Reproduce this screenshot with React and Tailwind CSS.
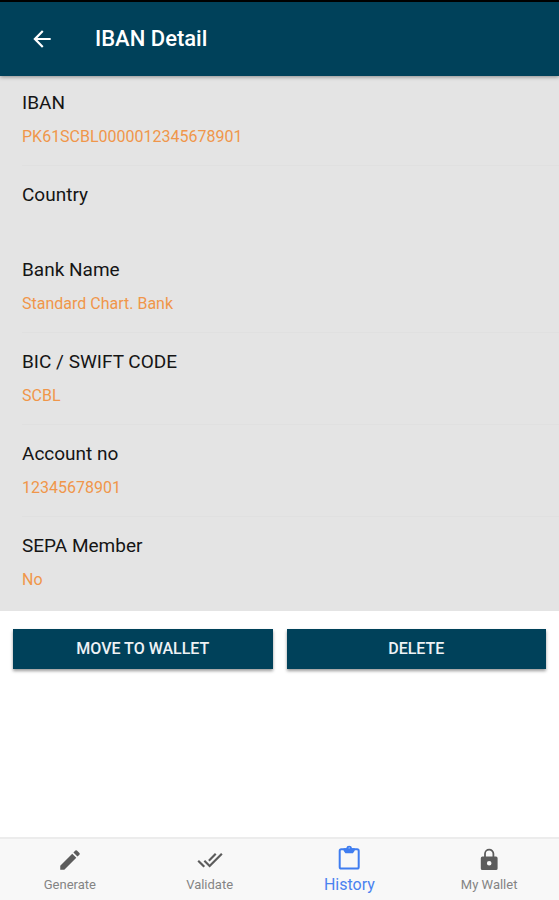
import React, { useState } from "react";
import { MdArrowBack, MdDoneAll, MdEdit } from "react-icons/md";
import clsx from "clsx";

const details = [
  { label: "IBAN", value: "PK61SCBL0000012345678901" },
  { label: "Country", value: "" },
  { label: "Bank Name", value: "Standard Chart. Bank" },
  { label: "BIC / SWIFT CODE", value: "SCBL" },
  { label: "Account no", value: "12345678901" },
  { label: "SEPA Member", value: "No" },
];

const ClipboardIcon = ({ className }) => (
  <svg viewBox="0 0 26 26" fill="none" className={className} aria-hidden="true">
    <rect
      x="3.7"
      y="4.2"
      width="19"
      height="19.4"
      rx="1.6"
      stroke="currentColor"
      strokeWidth="2"
    />
    <path
      d="M7.6 3.2h2.6a3 3 0 0 1 5.9 0h2.6v2.6l-1.8 2.5H9.4L7.6 5.8zM13.2 2.5a.9.9 0 1 0 0 1.8.9.9 0 0 0 0-1.8z"
      fill="currentColor"
      fillRule="evenodd"
    />
  </svg>
);

const LockIcon = ({ className }) => (
  <svg viewBox="0 0 26 26" fill="none" className={className} aria-hidden="true">
    <path
      d="M9 10.5V6.8a4.2 4.2 0 0 1 8.4 0v3.7"
      stroke="currentColor"
      strokeWidth="1.8"
    />
    <path
      d="M6.4 9.6H20a1.6 1.6 0 0 1 1.6 1.6v10.2a1.6 1.6 0 0 1-1.6 1.6H6.4a1.6 1.6 0 0 1-1.6-1.6V11.2a1.6 1.6 0 0 1 1.6-1.6zM13.2 14a2.3 2.3 0 1 0 0 4.6 2.3 2.3 0 0 0 0-4.6z"
      fill="currentColor"
      fillRule="evenodd"
    />
  </svg>
);

const tabs = [
  { name: "Generate", icon: MdEdit },
  { name: "Validate", icon: MdDoneAll },
  { name: "History", icon: ClipboardIcon },
  { name: "My Wallet", icon: LockIcon },
];

const DetailRow = ({ label, value }) => (
  <div className="group min-h-[75px] pt-[17px] first:pt-[15px]">
    <dt className="text-[19px] leading-6 text-[#151515]">{label}</dt>
    {value && (
      <dd className="mt-3 border-b border-[#e0e0e0] pb-[18px] text-base leading-5 text-[#f0964a] group-last:border-transparent">
        {value}
      </dd>
    )}
  </div>
);

const ActionButton = ({ children }) => (
  <button
    type="button"
    className="h-10 flex-1 bg-[#00415a] text-base font-medium text-[#eef2f5] shadow-[0_2px_3px_rgba(0,0,0,0.4)]"
  >
    {children}
  </button>
);

const App = () => {
  const [activeTab, setActiveTab] = useState("History");

  return (
    <div className="flex min-h-screen flex-col bg-white font-[Roboto,sans-serif]">
      <header className="relative flex h-[76px] items-center gap-10 border-t-2 border-black bg-[#00415a] px-[29px] text-white shadow-[0_1px_4px_rgba(0,0,0,0.4)]">
        <button type="button" aria-label="Back">
          <MdArrowBack className="size-[26px]" />
        </button>
        <h1 className="text-[22px] leading-7 font-medium">IBAN Detail</h1>
      </header>

      <main className="flex-1">
        <dl className="bg-[#e4e4e4] pb-0.5 pl-[22px]">
          {details.map((item) => (
            <DetailRow key={item.label} {...item} />
          ))}
        </dl>
        <div className="flex gap-3.5 px-[13px] pt-[18px]">
          <ActionButton>MOVE TO WALLET</ActionButton>
          <ActionButton>DELETE</ActionButton>
        </div>
      </main>

      <nav className="flex h-[63px] border-t-2 border-[#ececec] bg-[#f8f8f8]">
        {tabs.map(({ name, icon: Icon }) => {
          const active = name === activeTab;
          return (
            <button
              key={name}
              type="button"
              onClick={() => setActiveTab(name)}
              className={clsx(
                "flex flex-1 flex-col items-center",
                active
                  ? "gap-0.5 pt-1.5 text-base leading-6 text-[#4a82f0]"
                  : "gap-0.5 pt-2 text-[13px] leading-5 text-[#848484]",
              )}
            >
              <Icon
                className={clsx(
                  "size-[26px]",
                  active ? "text-[#3f7df0]" : "text-[#5c5c5c]",
                )}
              />
              {name}
            </button>
          );
        })}
      </nav>
    </div>
  );
};

export default App;
